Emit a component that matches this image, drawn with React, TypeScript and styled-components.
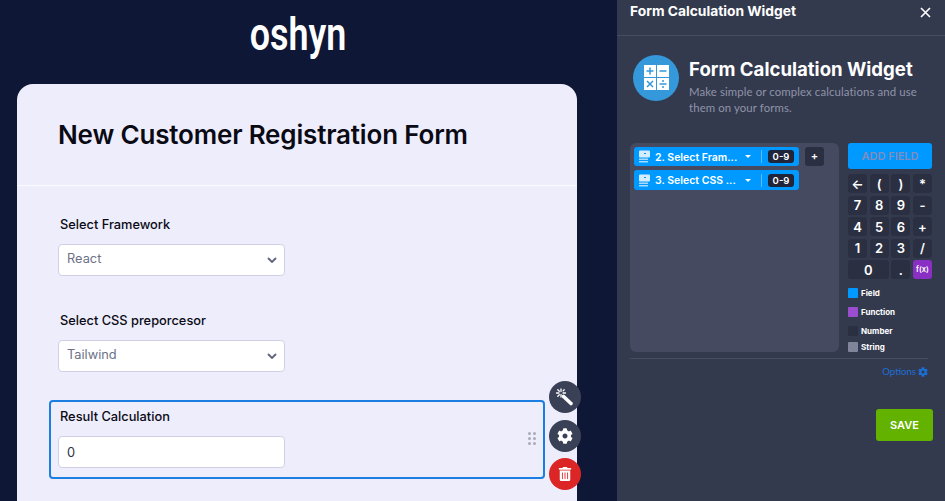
import React from 'react';

import styled, { createGlobalStyle } from 'styled-components';
import { FaCog, FaTrashAlt } from 'react-icons/fa';

const GlobalStyle = createGlobalStyle`
    html, body {
        margin: 0;
        height: 501px;
        overflow: hidden;
        background: #0f1736;
    }
`

const Page = styled.div`
    display: flex;
    width: 945px;
    height: 501px;
    overflow: hidden;
    font-family: "Inter", "Liberation Sans", sans-serif;
`
const Stage = styled.main`
    width: 617px;
    flex: none;
    display: flex;
    flex-direction: column;
    padding-left: 17px;
    box-sizing: border-box;
`
const LogoBar = styled.div`
    height: 84px;
    width: 560px;
    flex: none;
    display: flex;
    justify-content: center;
    padding-left: 1px;
    box-sizing: border-box;
`
const Logo = styled.span`
    color: #fff;
    font-family: "Roboto", sans-serif;
    font-weight: 600;
    font-size: 46px;
    line-height: 68px;
    display: inline-block;
    transform: scaleX(0.78);
`
const Card = styled.section`
    width: 560px;
    flex: none;
    height: 440px;
    background: #eeedfc;
    border-radius: 16px 16px 0 0;
`
const CardHead = styled.header`
    height: 102px;
    padding-left: 41px;
    box-sizing: border-box;
    border-bottom: 1px solid #fbfbff;
    display: flex;
    align-items: center;
`
const FormTitle = styled.h1`
    margin: 0;
    color: #0a0a14;
    font-size: 26px;
    font-weight: 600;
    letter-spacing: -0.17px;
`
const FieldList = styled.div`
    display: flex;
    flex-direction: column;
    gap: 17px;
    padding: 22px 0 0 32px;
`
const Field = styled.div<{ $active?: boolean }>`
    position: relative;
    width: 496px;
    height: 79px;
    box-sizing: border-box;
    padding: 5px 7px 0;
    border: 2px solid ${p => (p.$active ? '#1a7fe0' : 'transparent')};
    border-radius: 4px;
`
const Label = styled.label`
    display: block;
    margin: 0 0 9px 2px;
    color: #0a0a14;
    font-size: 12.8px;
    font-weight: 500;
    line-height: 20px;
`
const Control = styled.div`
    width: 227px;
    height: 32px;
    box-sizing: border-box;
    display: flex;
    align-items: center;
    justify-content: space-between;
    padding: 0 7px 3px 8px;
    background: #fff;
    border: 1px solid #cfd0e4;
    border-radius: 4px;
    font-size: 12.8px;
    color: #6c7188;
`
const InputValue = styled(Control)`
    color: #2c3345;
    padding-bottom: 0;
`
const ChevronWrap = styled.span`
    display: flex;
    margin-top: 3px;
`
const Grip = styled.div`
    position: absolute;
    right: 7px;
    top: 30px;
    display: grid;
    grid-template-columns: 3px 3px;
    gap: 2px;
    & > i {
        width: 3px;
        height: 3px;
        border-radius: 50%;
        background: #a9abb8;
    }
`
const Actions = styled.div`
    position: absolute;
    left: 498px;
    top: -21px;
    display: flex;
    flex-direction: column;
    gap: 6.5px;
`
const RoundButton = styled.button<{ $danger?: boolean }>`
    width: 32px;
    height: 32px;
    padding: 0;
    border: 0;
    border-radius: 50%;
    display: flex;
    align-items: center;
    justify-content: center;
    color: #fff;
    font-size: ${p => (p.$danger ? 14 : 16)}px;
    background: ${p => (p.$danger ? '#dc2626' : '#3a4056')};
`
const Panel = styled.aside`
    width: 328px;
    flex: none;
    height: 501px;
    background: #343a4e;
    color: #fff;
    font-family: "Lato", "Inter", sans-serif;
`
const PanelHead = styled.header`
    height: 36px;
    box-sizing: border-box;
    padding: 0 14px 13px 13px;
    border-bottom: 1px solid #474c60;
    display: flex;
    justify-content: space-between;
    align-items: flex-end;
`
const PanelTitle = styled.div`
    font-size: 13.8px;
    font-weight: 700;
    line-height: 22px;
    font-family: "Inter", sans-serif;
`
const CloseButton = styled.div`
    display: flex;
    margin-bottom: 4px;
`
const Hero = styled.div`
    display: flex;
    gap: 10px;
    padding: 19px 16px 0;
`
const HeroText = styled.div`
    padding-top: 3px;
`
const HeroTitle = styled.div`
    font-family: "Inter", sans-serif;
    font-size: 18.6px;
    font-weight: 700;
    line-height: 22px;
`
const HeroDesc = styled.div`
    font-size: 11.4px;
    line-height: 16px;
    color: #8f94a8;
    margin-top: 4px;
    letter-spacing: 0.1px;
`
const Builder = styled.div`
    display: flex;
    gap: 9px;
    padding: 27px 13px 0;
`
const Formula = styled.div`
    width: 209px;
    height: 209px;
    box-sizing: border-box;
    padding: 4px;
    display: flex;
    flex-direction: column;
    gap: 4px;
    background: #454a60;
    border-radius: 6px;
`
const ChipRow = styled.div`
    display: flex;
    gap: 6px;
`
const Chip = styled.div<{ $tall?: boolean }>`
    width: 165px;
    height: ${p => (p.$tall ? 20 : 19)}px;
    box-sizing: border-box;
    padding: 0 4px;
    display: flex;
    align-items: center;
    background: #0099ff;
    border-radius: 3px;
    font-family: "Inter", sans-serif;
    font-size: 10.5px;
    font-weight: 600;
`
const ChipName = styled.span`
    margin-left: 4px;
    padding-top: 1px;
    width: 83px;
    white-space: nowrap;
`
const Caret = styled.span`
    width: 0;
    height: 0;
    margin-left: 7px;
    border-left: 3px solid transparent;
    border-right: 3px solid transparent;
    border-top: 3px solid #fff;
`
const ChipDivider = styled.span`
    width: 1px;
    height: 13px;
    margin: 0 6px 0 10px;
    background: #5db8f5;
`
const ChipBadge = styled.span`
    width: 26px;
    height: 13px;
    line-height: 13px;
    text-align: center;
    border-radius: 3px;
    background: #20253a;
    font-size: 9.5px;
`
const AddButton = styled.div`
    width: 19px;
    height: 19px;
    line-height: 18px;
    text-align: center;
    border-radius: 3px;
    background: #2b2f42;
    font-family: "Inter", sans-serif;
    font-size: 11px;
    font-weight: 600;
`
const Side = styled.div`
    width: 84px;
`
const AddField = styled.div`
    height: 26px;
    line-height: 26px;
    text-align: center;
    border-radius: 3px;
    background: #0099ff;
    color: #808dbd;
    font-family: "Inter", sans-serif;
    font-size: 11px;
    font-weight: 600;
`
const Keypad = styled.div`
    display: grid;
    grid-template-columns: repeat(4, 19px);
    grid-auto-rows: 19px;
    justify-content: space-between;
    row-gap: 2.5px;
    margin-top: 5px;
`
const Key = styled.div<{ $wide?: boolean; $fn?: boolean }>`
    grid-column: ${p => (p.$wide ? 'span 2' : 'auto')};
    border-radius: 3px;
    display: flex;
    align-items: center;
    justify-content: center;
    background: ${p => (p.$fn ? '#8a2fc4' : '#2b2f42')};
    font-family: "Inter", sans-serif;
    font-size: ${p => (p.$fn ? '7.5px' : '13px')};
    font-weight: 600;
`
const Legend = styled.div`
    margin-top: 9px;
`
const LegendItem = styled.div<{ $gap: number }>`
    display: flex;
    align-items: center;
    gap: 3px;
    height: 10px;
    margin-bottom: ${p => p.$gap}px;
    font-family: "Inter", sans-serif;
    font-size: 8px;
    font-weight: 700;
`
const Swatch = styled.span<{ $color: string }>`
    width: 10px;
    height: 10px;
    border-radius: 1px;
    background: ${p => p.$color};
`
const Rule = styled.div`
    height: 1px;
    margin: 6px 17px 0 13px;
    background: #474c60;
`
const OptionsRow = styled.div`
    display: flex;
    justify-content: flex-end;
    align-items: center;
    gap: 2px;
    padding: 6px 17px 0 0;
    color: #1a6fd6;
    font-size: 9.6px;
    line-height: 13px;
`
const SaveRow = styled.div`
    display: flex;
    justify-content: flex-end;
    padding: 31px 12px 0 0;
`
const SaveButton = styled.div`
    width: 57px;
    height: 32px;
    line-height: 32px;
    text-align: center;
    border-radius: 3px;
    background: #64b200;
    font-family: "Inter", sans-serif;
    font-size: 11px;
    font-weight: 600;
`

const CalcIcon = () => (
    <svg width="46" height="46" viewBox="0 0 46 46">
        <circle cx="23" cy="23" r="23" fill="#3498db" />
        <rect x="11" y="10" width="12" height="12" fill="#fff" />
        <rect x="24" y="10" width="12" height="12" fill="#fff" />
        <rect x="11" y="23" width="12" height="12" fill="#fff" />
        <rect x="24" y="23" width="12" height="12" fill="#fff" />
        <g stroke="#3498db" strokeWidth="1.5" fill="none">
            <path d="M13.5 16h7M17 12.5v7" />
            <path d="M26.5 16h7" />
            <path d="M14 26l6 6M20 26l-6 6" />
            <path d="M26.5 29h7" />
        </g>
        <circle cx="30" cy="26" r="1" fill="#3498db" />
        <circle cx="30" cy="32" r="1" fill="#3498db" />
    </svg>
);

const FieldGlyph = () => (
    <svg width="13" height="13" viewBox="0 0 13 13">
        <rect x="1" y="0.5" width="11" height="7" rx="1" fill="#d5ecff" />
        <path d="M6 3l1 1 1-1" stroke="#0099ff" strokeWidth="1" fill="none" />
        <rect x="1" y="8.5" width="9" height="1.5" fill="#a8dcff" />
        <rect x="1" y="11" width="9" height="1.5" fill="#a8dcff" />
    </svg>
);

const WandIcon = () => (
    <svg width="20" height="20" viewBox="0 0 20 20">
        <path d="M8.5 9.5l7.5 7" stroke="#fff" strokeWidth="3.6" strokeLinecap="round" />
        <g stroke="#fff" strokeWidth="1.3" strokeLinecap="round">
            <path d="M6 2v2.5M6 7.5V10M1.5 6H4M8 6h2.5" />
            <path d="M2.8 2.8l1.5 1.5M8.2 3.8l1-1M2.8 9.2l1.5-1.5" />
        </g>
    </svg>
);

const Chevron = () => (
    <ChevronWrap>
        <svg width="10" height="6" viewBox="0 0 10 6">
            <path d="M1 1l4 4 4-4" stroke="#5f6379" strokeWidth="1.8" fill="none" />
        </svg>
    </ChevronWrap>
);

const keys = ['←', '(', ')', '*', '7', '8', '9', '-', '4', '5', '6', '+', '1', '2', '3', '/'];

const App: React.FC = () => {
    return (
        <Page>
            <GlobalStyle />
            <Stage>
                <LogoBar>
                    <Logo>oshyn</Logo>
                </LogoBar>
                <Card>
                    <CardHead>
                        <FormTitle>New Customer Registration Form</FormTitle>
                    </CardHead>
                    <FieldList>
                        <Field>
                            <Label>Select Framework</Label>
                            <Control>React<Chevron /></Control>
                        </Field>
                        <Field>
                            <Label>Select CSS preporcesor</Label>
                            <Control>Tailwind<Chevron /></Control>
                        </Field>
                        <Field $active>
                            <Label>Result Calculation</Label>
                            <InputValue>0</InputValue>
                            <Grip>
                                <i /><i /><i /><i /><i /><i />
                            </Grip>
                            <Actions>
                                <RoundButton><WandIcon /></RoundButton>
                                <RoundButton><FaCog /></RoundButton>
                                <RoundButton $danger><FaTrashAlt /></RoundButton>
                            </Actions>
                        </Field>
                    </FieldList>
                </Card>
            </Stage>
            <Panel>
                <PanelHead>
                    <PanelTitle>Form Calculation Widget</PanelTitle>
                    <CloseButton>
                        <svg width="11" height="11" viewBox="0 0 11 11">
                            <path d="M1 1l9 9M10 1l-9 9" stroke="#fff" strokeWidth="1.6" />
                        </svg>
                    </CloseButton>
                </PanelHead>
                <Hero>
                    <CalcIcon />
                    <HeroText>
                        <HeroTitle>Form Calculation Widget</HeroTitle>
                        <HeroDesc>
                            Make simple or complex calculations and use<br />them on your forms.
                        </HeroDesc>
                    </HeroText>
                </Hero>
                <Builder>
                    <Formula>
                        <ChipRow>
                            <Chip>
                                <FieldGlyph />
                                <ChipName>2. Select Fram...</ChipName>
                                <Caret />
                                <ChipDivider />
                                <ChipBadge>0-9</ChipBadge>
                            </Chip>
                            <AddButton>+</AddButton>
                        </ChipRow>
                        <ChipRow>
                            <Chip $tall>
                                <FieldGlyph />
                                <ChipName>3. Select CSS ...</ChipName>
                                <Caret />
                                <ChipDivider />
                                <ChipBadge>0-9</ChipBadge>
                            </Chip>
                        </ChipRow>
                    </Formula>
                    <Side>
                        <AddField>ADD FIELD</AddField>
                        <Keypad>
                            {keys.map(k => <Key key={k}>{k}</Key>)}
                            <Key $wide>0</Key>
                            <Key>.</Key>
                            <Key $fn>f(x)</Key>
                        </Keypad>
                        <Legend>
                            <LegendItem $gap={9}><Swatch $color="#0099ff" />Field</LegendItem>
                            <LegendItem $gap={9}><Swatch $color="#9b4dd0" />Function</LegendItem>
                            <LegendItem $gap={6}><Swatch $color="#2b2f42" />Number</LegendItem>
                            <LegendItem $gap={0}><Swatch $color="#80859b" />String</LegendItem>
                        </Legend>
                    </Side>
                </Builder>
                <Rule />
                <OptionsRow>Options <FaCog size={10} /></OptionsRow>
                <SaveRow>
                    <SaveButton>SAVE</SaveButton>
                </SaveRow>
            </Panel>
        </Page>
    );
};

export default App;
